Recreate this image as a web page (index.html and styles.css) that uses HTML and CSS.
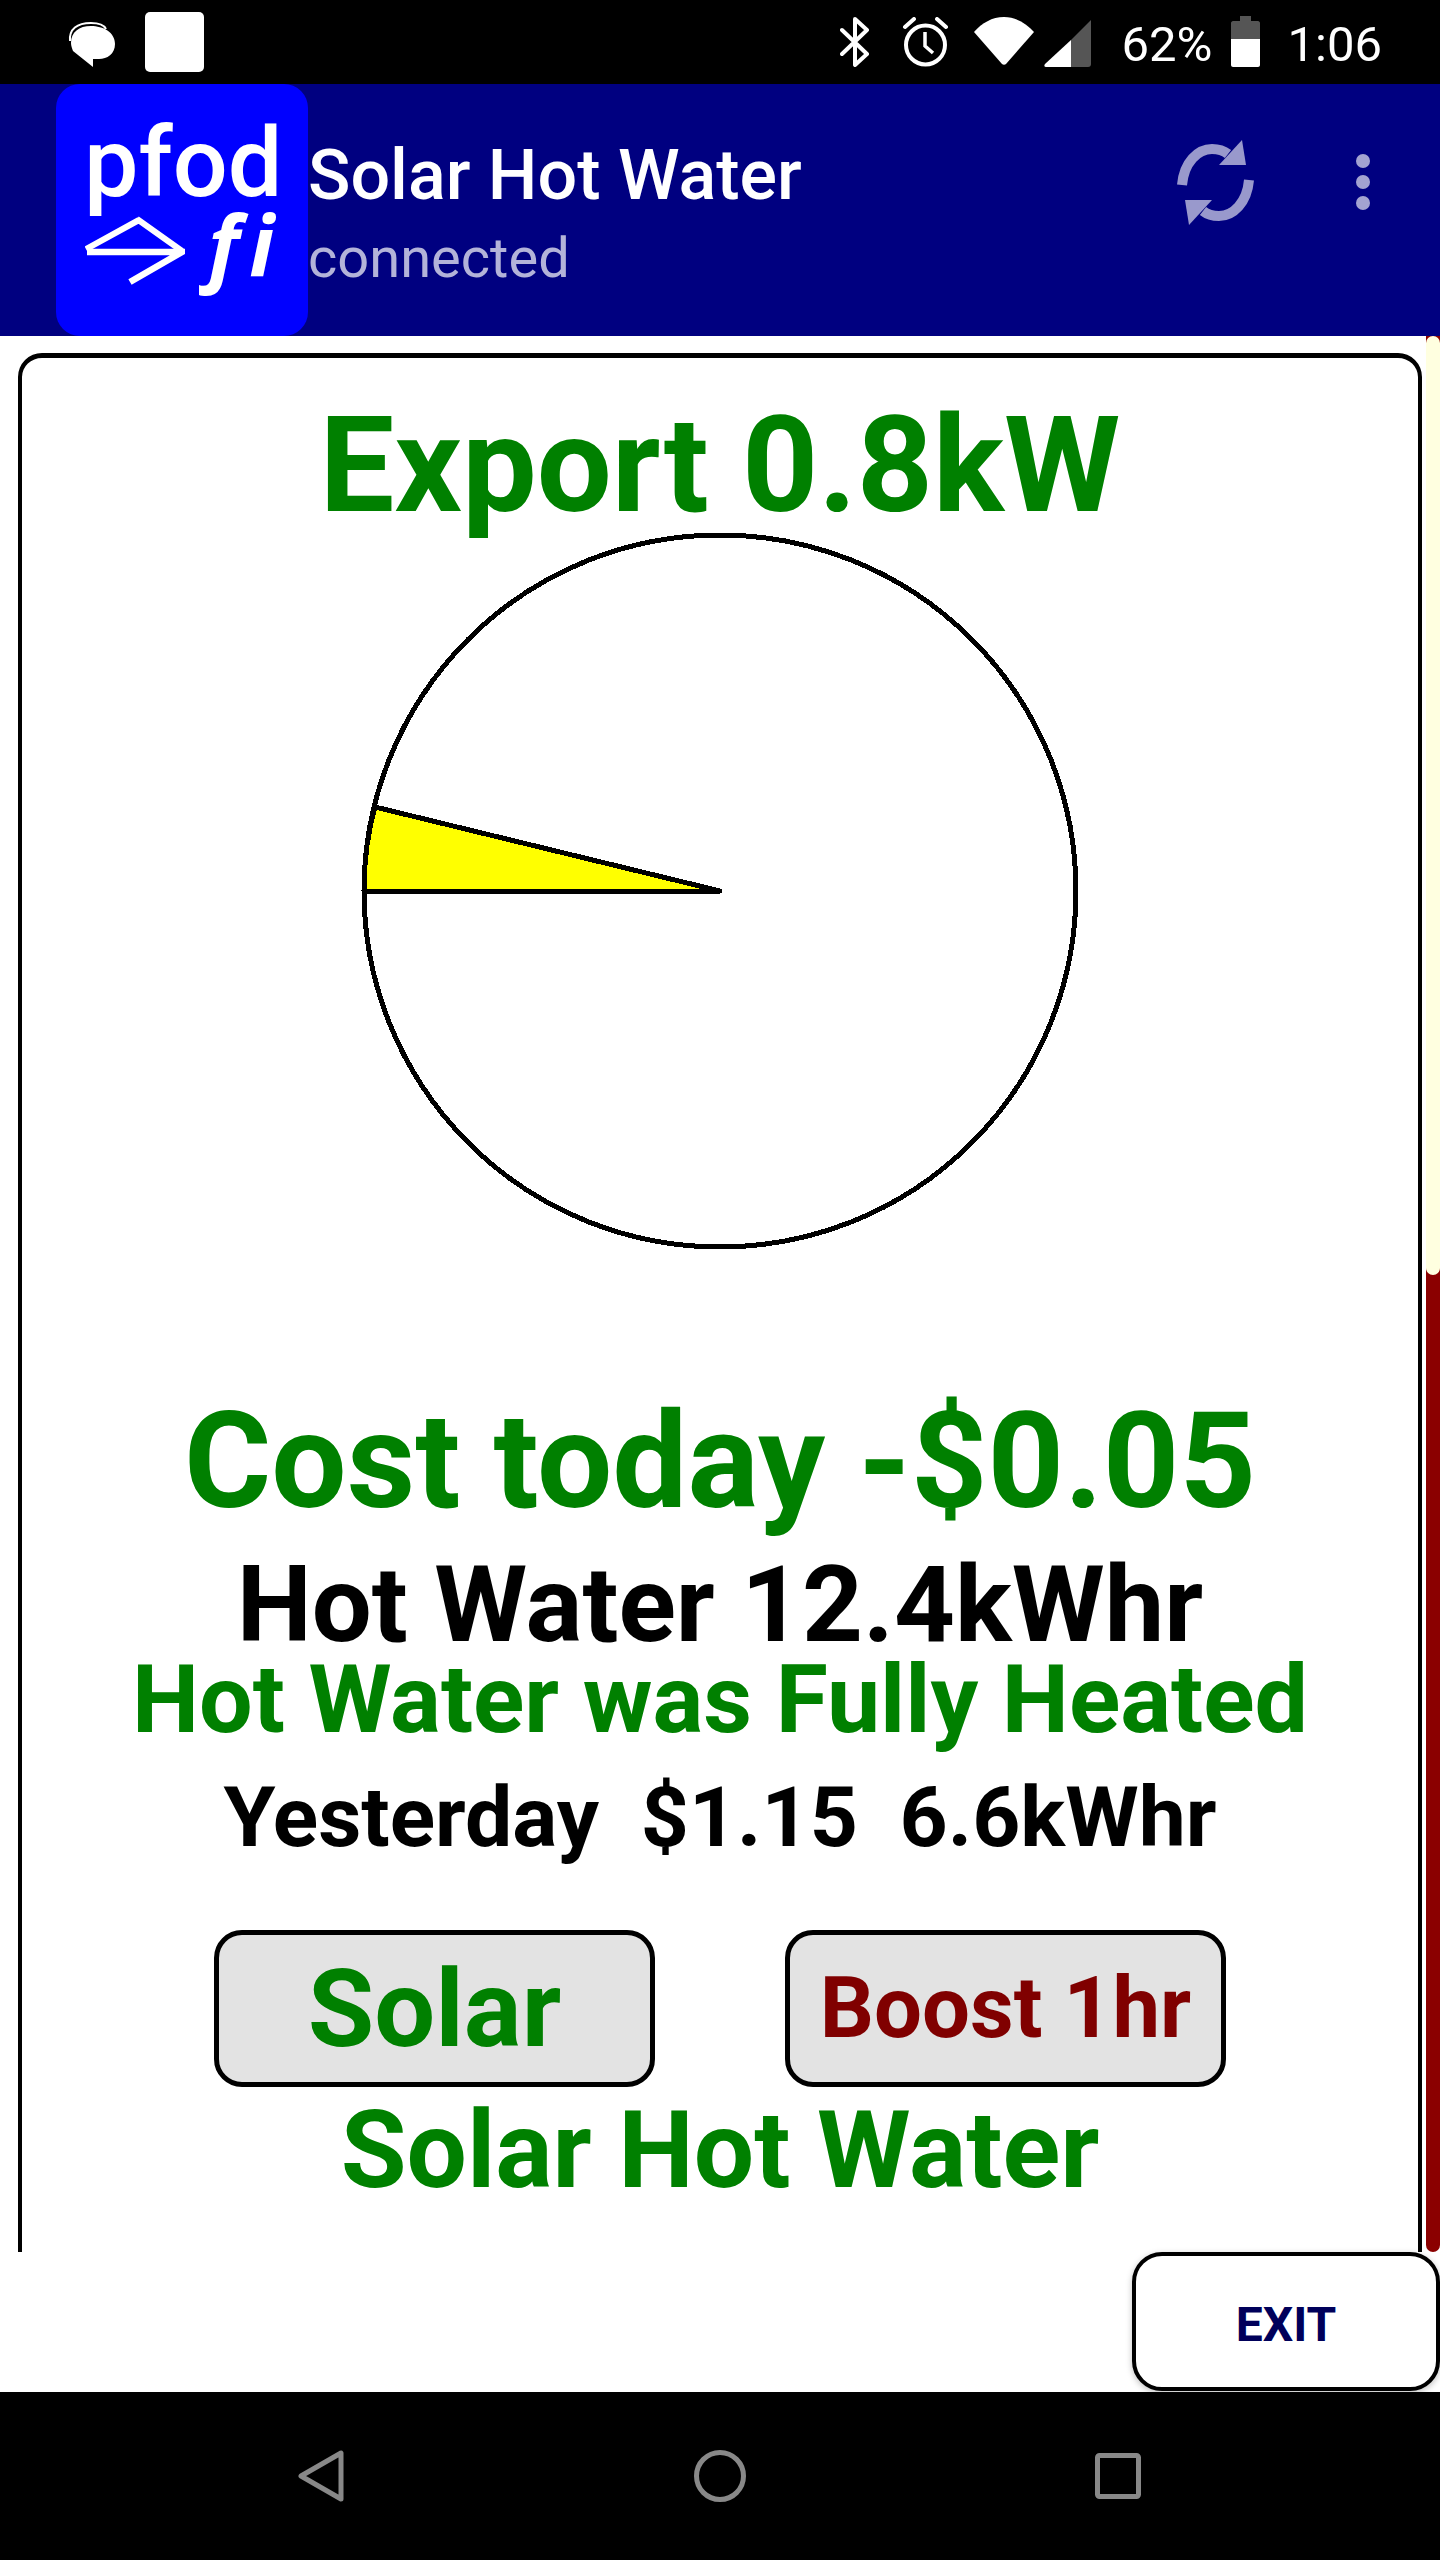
FILE: index.html
```html
<!DOCTYPE html>
<html lang="en">
  <head>
    <meta charset="UTF-8" />
    <meta name="viewport" content="width=device-width, initial-scale=1.0" />
    <title>Solar Hot Water</title>
    <link rel="stylesheet" href="styles.css">
  </head>
  <body>
    <div class="screen">
      <div class="status-bar">
        <svg class="icon-bubble" width="48" height="46" viewBox="0 0 48 46">
          <path d="M3 20C2 8 10 2 24 2c8 0 13 2 15 6" fill="none" stroke="#fff" stroke-width="2" />
          <path d="M4 22C4 11 12 5 24 5s24 6 24 18c0 10-8 15-16 15H26v8L6 30c-1-3-2-5-2-8z" fill="#fff" />
        </svg>
        <div class="icon-square"></div>
        <div class="status-right">
          <svg class="icon-bt" width="30" height="50" viewBox="0 0 30 50">
            <path d="M2 13l25 24-12 11V2l12 11L2 37" fill="none" stroke="#fff" stroke-width="4" stroke-linecap="round" stroke-linejoin="round" />
          </svg>
          <svg class="icon-alarm" width="47" height="50" viewBox="0 0 47 50">
            <circle cx="23.5" cy="28" r="19.5" fill="none" stroke="#fff" stroke-width="4" />
            <path d="M23 15v14l8 7" fill="none" stroke="#fff" stroke-width="3.5" />
            <path d="M3 10l9-8M44 10l-9-8" fill="none" stroke="#fff" stroke-width="4" stroke-linecap="round" />
          </svg>
          <svg class="icon-wifi" width="60" height="48" viewBox="0 0 60 48">
            <path d="M0 15C8 6 18 0 30 0s22 6 30 15L32 47c-1 1-3 1-4 0z" fill="#fff" />
          </svg>
          <svg class="icon-signal" width="47" height="47" viewBox="0 0 47 47">
            <path d="M47 0v44c0 2-1 3-3 3H27V20z" fill="#555" />
            <path d="M27 20v27H2c-2 0-2-2-1-3z" fill="#fff" />
          </svg>
          <span class="status-text battery-text">62%</span>
          <svg class="icon-battery" width="29" height="51" viewBox="0 0 29 51">
            <path d="M9 0h11v5h7c1 0 2 1 2 2v16H0V7c0-1 1-2 2-2h7z" fill="#555" />
            <path d="M0 23h29v26c0 1-1 2-2 2H2c-1 0-2-1-2-2z" fill="#fff" />
          </svg>
          <span class="status-text clock">1:06</span>
        </div>
      </div>

      <div class="app-bar">
        <div class="logo">
          <span class="logo-pfod">pfod</span>
          <svg class="logo-arrow" width="100" height="70" viewBox="0 0 100 70">
            <path d="M1 33L54 4M52 3l45 32" fill="none" stroke="#fff" stroke-width="6" />
            <path d="M2 36h95L45 66" fill="none" stroke="#fff" stroke-width="6.5" />
          </svg>
          <span class="logo-fi">fi</span>
        </div>
        <div class="app-titles">
          <div class="app-title">Solar Hot Water</div>
          <div class="app-subtitle">connected</div>
        </div>
        <svg class="icon-sync" width="83" height="86" viewBox="0 0 83 86">
          <g>
            <path d="M8 45C10 22 24 9 38 9c6 0 11 1 16 5" fill="none" stroke="#9999cc" stroke-width="10" />
            <path d="M68 0l4 25H45z" fill="#9999cc" />
          </g>
          <g transform="rotate(180 41.5 42.5)">
            <path d="M8 45C10 22 24 9 38 9c6 0 11 1 16 5" fill="none" stroke="#9999cc" stroke-width="10" />
            <path d="M68 0l4 25H45z" fill="#9999cc" />
          </g>
        </svg>
        <div class="overflow-menu">
          <span class="dot"></span>
          <span class="dot"></span>
          <span class="dot"></span>
        </div>
      </div>

      <div class="content">
        <div class="panel">
          <div class="card">
            <div class="line line-export">Export 0.8kW</div>
            <svg class="dial" width="720" height="720" viewBox="0 0 720 720" shape-rendering="crispEdges">
              <circle cx="360" cy="360" r="356" fill="#fff" stroke="#000" stroke-width="5" />
              <path d="M360 360H4C4 326 8 300 15 276z" fill="#ff0" stroke="#000" stroke-width="5" stroke-linejoin="round" />
              <circle cx="360" cy="360" r="356" fill="none" stroke="#000" stroke-width="5" />
            </svg>
            <div class="line line-cost">Cost today -$0.05</div>
            <div class="line line-water">Hot Water 12.4kWhr</div>
            <div class="line line-heated">Hot Water was Fully Heated</div>
            <div class="line line-yesterday">Yesterday&nbsp;&nbsp;$1.15&nbsp;&nbsp;6.6kWhr</div>
            <div class="button-row">
              <div class="btn btn-solar">Solar</div>
              <div class="btn btn-boost">Boost 1hr</div>
            </div>
            <div class="line line-footer">Solar Hot Water</div>
          </div>
        </div>
        <div class="scroll-track">
          <div class="scroll-thumb"></div>
        </div>
      </div>

      <div class="exit-row">
        <div class="exit-btn">EXIT</div>
      </div>

      <div class="nav-bar">
        <svg class="nav-back" width="46" height="52" viewBox="0 0 46 52">
          <path d="M43 3v46L3 26z" fill="none" stroke="#888" stroke-width="5" stroke-linejoin="round" />
        </svg>
        <svg class="nav-home" width="52" height="52" viewBox="0 0 52 52">
          <circle cx="26" cy="26" r="23.5" fill="none" stroke="#888" stroke-width="5" />
        </svg>
        <svg class="nav-recent" width="46" height="46" viewBox="0 0 46 46">
          <rect x="2.5" y="2.5" width="41" height="41" rx="2" fill="none" stroke="#888" stroke-width="5" />
        </svg>
      </div>
    </div>
  </body>
</html>
```

FILE: styles.css
```css
body {
  margin: 0;
  font-family: Roboto, 'Liberation Sans', sans-serif;
  background-color: #000;
}

.screen {
  width: 1440px;
  height: 2560px;
  display: flex;
  flex-direction: column;
  overflow: hidden;
  background-color: #fff;
}

/* status bar */
.status-bar {
  height: 84px;
  flex: none;
  display: flex;
  align-items: flex-start;
  background-color: #000;
  color: #fff;
}

.icon-bubble {
  margin: 21px 0 0 67px;
}

.icon-square {
  width: 59px;
  height: 60px;
  margin: 12px 0 0 30px;
  background-color: #fff;
  border-radius: 5px;
}

.status-right {
  margin-left: auto;
  display: flex;
  align-items: flex-start;
  padding-right: 58px;
}

.status-right svg {
  display: block;
}

.icon-bt {
  margin-top: 17px;
}

.icon-alarm {
  margin: 17px 0 0 32px;
}

.icon-wifi {
  margin: 17px 0 0 25px;
}

.icon-signal {
  margin: 20px 0 0 10px;
}

.icon-battery {
  margin: 16px 0 0 18px;
}

.status-text {
  font-size: 49px;
  line-height: 56px;
  margin-top: 17px;
}

.battery-text {
  margin-left: 31px;
}

.clock {
  margin-left: 28px;
}

/* app bar */
.app-bar {
  height: 252px;
  flex: none;
  display: flex;
  align-items: flex-start;
  background-color: #000080;
  color: #fff;
}

.logo {
  position: relative;
  width: 252px;
  height: 252px;
  margin-left: 56px;
  background-color: #00f;
  border-radius: 24px;
  flex: none;
}

.logo-pfod {
  position: absolute;
  left: 28px;
  top: 24px;
  font-size: 97px;
  line-height: 110px;
  font-weight: 500;
}

.logo-arrow {
  position: absolute;
  left: 29px;
  top: 132px;
}

.logo-fi {
  position: absolute;
  left: 152px;
  top: 101px;
  font-family: 'Open Sans', Roboto, sans-serif;
  font-size: 84px;
  line-height: 118px;
  font-style: italic;
  font-weight: 700;
  letter-spacing: 10px;
}

.app-title {
  font-size: 70px;
  line-height: 78px;
  font-weight: 500;
  margin-top: 52px;
}

.app-subtitle {
  font-size: 56px;
  line-height: 64px;
  color: #b3b3d9;
  margin-top: 12px;
}

.icon-sync {
  margin: 56px 0 0 auto;
}

.overflow-menu {
  display: flex;
  flex-direction: column;
  gap: 7px;
  margin: 70px 70px 0 99px;
}

.dot {
  width: 14px;
  height: 14px;
  border-radius: 50%;
  background-color: #a3a3d1;
}

/* main area */
.content {
  height: 1916px;
  flex: none;
  display: flex;
  overflow: hidden;
}

.panel {
  flex: 1;
  padding: 17px 4px 0 18px;
  overflow: hidden;
}

.card {
  height: 2000px;
  box-sizing: border-box;
  border: 4px solid #000;
  border-top-width: 5px;
  border-radius: 24px;
  display: flex;
  flex-direction: column;
  align-items: center;
}

.line {
  white-space: nowrap;
  font-weight: 700;
  color: #008000;
}

.line-export {
  font-size: 133px;
  line-height: 130px;
  margin-top: 43px;
}

.dial {
  display: block;
  flex: none;
}

.line-cost {
  font-size: 133.5px;
  line-height: 140px;
  margin-top: 141px;
}

.line-water {
  font-size: 106.3px;
  line-height: 110px;
  margin-top: 18px;
  color: #000;
}

.line-heated {
  font-size: 95px;
  line-height: 70px;
  margin-top: 5px;
}

.line-yesterday {
  font-size: 84px;
  line-height: 80px;
  margin-top: 43px;
  color: #000;
}

.button-row {
  display: flex;
  gap: 130px;
  margin-top: 72px;
}

.btn {
  width: 441px;
  height: 157px;
  box-sizing: border-box;
  border: 5px solid #000;
  border-radius: 28px;
  background-color: #e3e3e3;
  display: flex;
  align-items: center;
  justify-content: center;
  font-weight: 700;
  line-height: 1;
}

.btn-solar {
  font-size: 108px;
  color: #008000;
}

.btn-boost {
  font-size: 85px;
  color: #800000;
}

.line-footer {
  font-size: 107px;
  line-height: 110px;
  margin-top: 9px;
}

/* scrollbar */
.scroll-track {
  width: 14px;
  flex: none;
  background-color: #8b0000;
  border-radius: 0 0 7px 7px;
}

.scroll-thumb {
  height: 939px;
  background-color: #ffffe0;
  border-radius: 7px;
}

/* exit */
.exit-row {
  height: 140px;
  flex: none;
  display: flex;
  justify-content: flex-end;
}

.exit-btn {
  width: 308px;
  height: 139px;
  box-sizing: border-box;
  border: 4px solid #000;
  border-radius: 30px;
  padding-top: 6px;
  background-color: #fff;
  box-shadow: 0 2px 6px rgba(0, 0, 0, 0.25);
  display: flex;
  align-items: center;
  justify-content: center;
  font-size: 48px;
  font-weight: 700;
  color: #00005a;
}

/* android nav */
.nav-bar {
  flex: 1;
  position: relative;
  background-color: #000;
}

.nav-back {
  position: absolute;
  left: 298px;
  top: 58px;
}

.nav-home {
  position: absolute;
  left: 694px;
  top: 58px;
}

.nav-recent {
  position: absolute;
  left: 1095px;
  top: 61px;
}
```
